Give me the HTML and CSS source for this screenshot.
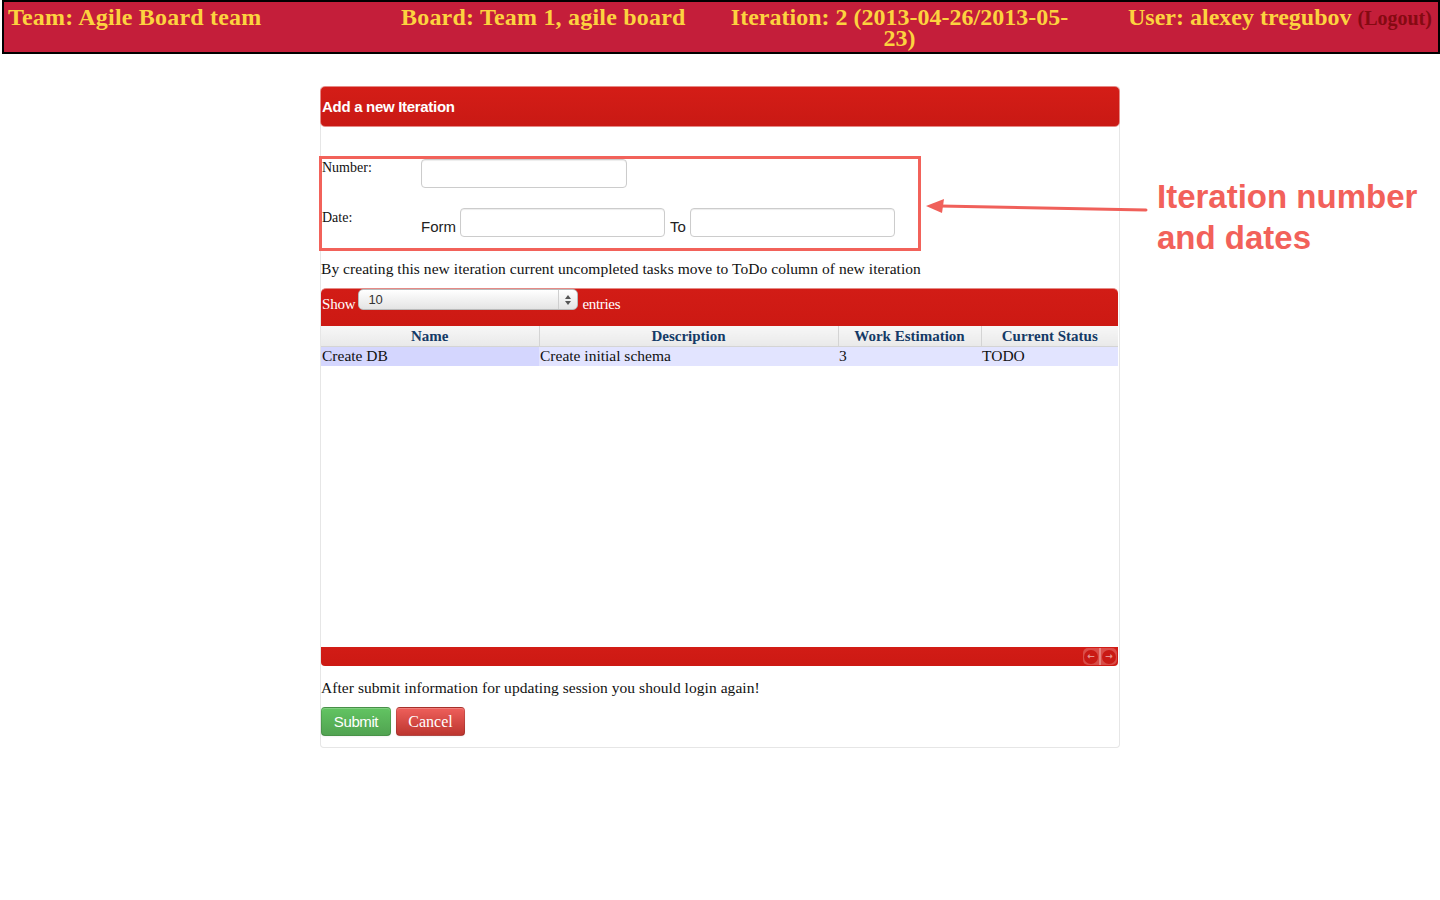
FILE: index.html
```html
<!DOCTYPE html>
<html>
<head>
<meta charset="utf-8">
<title>Add a new Iteration</title>
<link rel="stylesheet" href="styles.css">
</head>
<body>
<header class="topbar">
  <div class="tb-team">Team: Agile Board team</div>
  <div class="tb-board">Board: Team 1, agile board</div>
  <div class="tb-iter">Iteration: 2 (2013-04-26/2013-05-23)</div>
  <div class="tb-user">User: alexey tregubov <a class="logout">(Logout)</a></div>
</header>

<main class="panel">
  <div class="panel-head">Add a new Iteration</div>

  <div class="form-box">
    <div class="frow">
      <label class="flabel">Number:</label>
      <input class="finput" type="text">
    </div>
    <div class="frow">
      <label class="flabel date">Date:</label>
      <div class="dates">
        <span class="dlabel">Form</span>
        <input class="finput" type="text">
        <span class="dlabel to">To</span>
        <input class="finput" type="text">
      </div>
    </div>
  </div>

  <p class="note">By creating this new iteration current uncompleted tasks move to ToDo column of new iteration</p>

  <div class="dt">
    <div class="dt-top">
      <span class="dt-show">Show</span>
      <div class="select">
        <span class="sel-val">10</span>
        <span class="sel-arrows"><span class="up"></span><span class="down"></span></span>
      </div>
      <span class="dt-entries">entries</span>
    </div>
    <div class="dt-body">
      <table class="grid">
        <thead>
          <tr>
            <th class="c-name">Name</th>
            <th class="c-desc">Description</th>
            <th class="c-est">Work Estimation</th>
            <th class="c-stat">Current Status</th>
          </tr>
        </thead>
        <tbody>
          <tr>
            <td class="sorted">Create DB</td>
            <td>Create initial schema</td>
            <td>3</td>
            <td>TODO</td>
          </tr>
        </tbody>
      </table>
    </div>
    <div class="dt-foot">
      <span class="pager">
        <span class="pg">&#8592;</span><span class="pg-sep"></span><span class="pg">&#8594;</span>
      </span>
    </div>
  </div>

  <p class="note2">After submit information for updating session you should login again!</p>

  <div class="actions">
    <button class="btn btn-success">Submit</button>
    <button class="btn btn-danger">Cancel</button>
  </div>
</main>

<div class="annotation">
  <svg class="anno-arrow" width="230" height="30" viewBox="0 0 230 30">
    <line x1="222" y1="16" x2="16" y2="12" stroke="#f0605a" stroke-width="3" stroke-linecap="round"/>
    <polygon points="2,12 20,5 18,19" fill="#f0605a"/>
  </svg>
  <div class="anno-text">Iteration number<br>and dates</div>
</div>
</body>
</html>
```

FILE: styles.css
```css
* { box-sizing: border-box; }

html, body {
  margin: 0;
  padding: 0;
  background: #ffffff;
}

body {
  position: relative;
  font-family: "Liberation Serif", "Times New Roman", serif;
  font-size: 15px;
  color: #111;
  min-height: 900px;
}

/* ---------- top bar ---------- */
.topbar {
  margin-left: 2px;
  height: 54px;
  border: 2px solid #000;
  background: #c41e3a;
  display: flex;
  align-items: flex-start;
  padding-top: 5px;
  font-family: "Liberation Serif", "Times New Roman", serif;
  font-weight: bold;
  font-size: 24px;
  line-height: 21px;
  letter-spacing: 0.2px;
  color: #fcd33f;
}

.tb-team { width: 397px; padding-left: 4px; flex: none; }
.tb-board { width: 326px; flex: none; }
.tb-iter { width: 345px; text-align: center; flex: none; letter-spacing: 0; }
.tb-user { padding-left: 56px; white-space: nowrap; flex: none; letter-spacing: 0; }

.logout {
  color: #850a12;
  font-size: 20px;
}

/* ---------- panel ---------- */
.panel {
  width: 800px;
  margin: 32px auto 0;
  border: 1px solid #e6e6e6;
  border-top: none;
  border-radius: 4px;
  padding-bottom: 11px;
}

.panel-head {
  height: 41px;
  margin: 0 -1px;
  background: linear-gradient(#d41d17, #c91914);
  border: 1px solid #e58a86;
  border-radius: 5px;
  color: #fff;
  font-family: "Liberation Sans", Arial, sans-serif;
  font-weight: bold;
  font-size: 15px;
  letter-spacing: -0.3px;
  line-height: 39px;
  padding-left: 1px;
}

/* ---------- form ---------- */
.form-box {
  width: 602px;
  margin: 29px 0 0 -2px;
  border: 3px solid #f2625a;
  padding: 0 0 11px 0;
  display: flex;
  flex-direction: column;
  gap: 20px;
}

.frow {
  display: flex;
  align-items: flex-start;
}

.flabel {
  width: 99px;
  flex: none;
  font-size: 14px;
  line-height: 16px;
  padding-top: 1px;
  color: #111;
}

.flabel.date { padding-top: 2px; }

.finput {
  width: 206px;
  height: 29px;
  margin: 0;
  border: 1px solid #cccccc;
  border-radius: 4px;
  background: #fff;
  box-shadow: inset 0 1px 1px rgba(0,0,0,0.075);
  font-size: 14px;
}

.dates {
  display: flex;
  align-items: flex-end;
}

.dates .finput { width: 205px; }

.dlabel {
  font-family: "Liberation Sans", Arial, sans-serif;
  font-size: 15px;
  line-height: 18px;
  padding-bottom: 1px;
  margin-right: 4px;
  color: #222;
}

.dlabel.to { margin-left: 5px; }

.note {
  margin: 9px 0 0 0;
  font-size: 15.5px;
  line-height: 17px;
  letter-spacing: 0.05px;
}

/* ---------- data table ---------- */
.dt {
  width: 797px;
  margin-top: 11px;
}

.dt-top {
  height: 38px;
  background: linear-gradient(#d21c16, #cc1913);
  border-top: 1px solid #e58a86;
  border-radius: 5px 5px 0 0;
  display: flex;
  align-items: flex-start;
  color: #fff;
  padding-left: 1px;
}

.dt-show, .dt-entries {
  font-size: 15px;
  line-height: 16px;
  margin-top: 7px;
}

.dt-show { margin-right: 3px; letter-spacing: -0.2px; }
.dt-entries { margin-left: 4px; letter-spacing: -0.3px; }

.select {
  position: relative;
  width: 220px;
  height: 21px;
  background: linear-gradient(#ffffff, #e4e4e4);
  border: 1px solid #b9b9b9;
  border-radius: 5px;
  display: flex;
  align-items: center;
}

.sel-val {
  font-family: "Liberation Sans", Arial, sans-serif;
  font-size: 13px;
  color: #333;
  padding-left: 9px;
  flex: 1;
  margin-top: -1px;
}

.sel-arrows {
  width: 19px;
  height: 100%;
  border-left: 1px solid #cfcfcf;
  display: flex;
  flex-direction: column;
  align-items: center;
  justify-content: center;
  gap: 2px;
}

.sel-arrows .up {
  width: 0; height: 0;
  border-left: 3px solid transparent;
  border-right: 3px solid transparent;
  border-bottom: 4px solid #555;
}

.sel-arrows .down {
  width: 0; height: 0;
  border-left: 3px solid transparent;
  border-right: 3px solid transparent;
  border-top: 4px solid #555;
}

.dt-body {
  height: 321px;
  background: #fff;
}

.grid {
  width: 797px;
  border-collapse: collapse;
  table-layout: fixed;
}

.grid th {
  height: 20px;
  padding: 0;
  background: linear-gradient(#f7f7f7, #e9e9e9);
  border-right: 1px solid #d4d4d4;
  border-bottom: 1px solid #d4d4d4;
  color: #143a66;
  font-weight: bold;
  font-size: 15px;
  line-height: 18px;
  text-align: center;
}

.grid th:last-child { border-right: none; }

.c-name { width: 218px; }
.c-desc { width: 299px; }
.c-est { width: 143px; }
.c-stat { width: 137px; }

.grid td {
  height: 20px;
  padding: 0 1px;
  background: #e2e4ff;
  font-size: 15.5px;
  line-height: 18px;
  color: #111;
}

.grid td.sorted { background: #d4d6fe; }

.dt-foot {
  height: 19px;
  background: linear-gradient(#d21c16, #cc1913);
  border-radius: 0 0 4px 4px;
  display: flex;
  justify-content: flex-end;
  align-items: center;
}

.pager {
  display: flex;
  align-items: center;
  height: 17px;
  margin-right: 1px;
  padding: 0 1px;
  background: rgba(255,255,255,0.22);
  border-radius: 5px;
}

.pg {
  width: 14px;
  height: 14px;
  border-radius: 50%;
  background: #c91a15;
  display: flex;
  align-items: center;
  justify-content: center;
  font-family: "DejaVu Sans", sans-serif;
  font-size: 9px;
  font-weight: bold;
  line-height: 1;
  color: rgba(255,255,255,0.55);
}

.pg-sep {
  width: 2px;
  height: 17px;
  margin: 0 1px;
  background: rgba(255,255,255,0.3);
}

.note2 {
  margin: 13px 0 0 0;
  font-size: 15.5px;
  line-height: 17px;
  letter-spacing: 0.05px;
}

.actions {
  display: flex;
  gap: 5px;
  margin-top: 11px;
}

.btn {
  height: 29px;
  padding: 0;
  border: 1px solid rgba(0,0,0,0.12);
  border-bottom-color: rgba(0,0,0,0.25);
  border-radius: 4px;
  color: #fff;
  cursor: pointer;
  box-shadow: inset 0 1px 0 rgba(255,255,255,0.2), 0 1px 2px rgba(0,0,0,0.05);
}

.btn-success {
  width: 70px;
  background: linear-gradient(#62c462, #51a351);
  font-family: "Liberation Sans", Arial, sans-serif;
  font-size: 15px;
  letter-spacing: -0.4px;
}

.btn-danger {
  width: 69px;
  background: linear-gradient(#ee5f5b, #bd362f);
  font-family: "Liberation Serif", "Times New Roman", serif;
  font-size: 16px;
}

/* ---------- annotation overlay ---------- */
.annotation {
  position: absolute;
  left: 0;
  top: 0;
  width: 0;
  height: 0;
}

.anno-arrow {
  position: absolute;
  left: 924px;
  top: 194px;
}

.anno-text {
  position: absolute;
  left: 1157px;
  top: 176px;
  white-space: nowrap;
  font-family: "Liberation Sans", Arial, sans-serif;
  font-weight: bold;
  font-size: 33px;
  line-height: 41px;
  color: #f2615a;
}
```
